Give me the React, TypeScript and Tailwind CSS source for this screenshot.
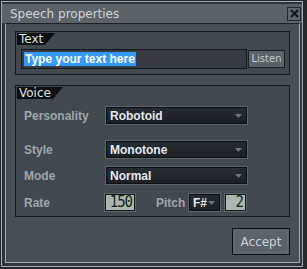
import React from "react";

function Tab({ label }: { label: string }) {
  return (
    <div className="flex h-[12px] items-stretch">
      <div className="bg-[#0c0e10] text-[#dfe3e7] text-[12px] leading-[12px] pl-[2px] pr-[2px]">{label}</div>
      <svg width="10" height="12" viewBox="0 0 10 12" className="block">
        <polygon points="0,0 10,0 0,12" fill="#0c0e10" />
      </svg>
    </div>
  );
}

function Dropdown({ value, w }: { value: string; w: string }) {
  return (
    <div className={`${w} h-[19px] border border-[#5c636a] bg-[#0d1013] p-px`}>
      <div className="h-full bg-gradient-to-b from-[#262c32] to-[#1b2025] flex items-center justify-between pl-[3px] pr-[4px]">
        <span className="text-[#e4e8ec] text-[12px] font-bold leading-none font-['Liberation_Sans',sans-serif]">{value}</span>
        <svg width="7" height="4" viewBox="0 0 7 4" className="block">
          <polygon points="0,0 7,0 3.5,4" fill="#6d757c" />
        </svg>
      </div>
    </div>
  );
}

function Lcd({ value, w }: { value: string; w: string }) {
  return (
    <div className={`${w} h-[19px] border border-[#5d646a] bg-[#151a1e] p-px`}>
      <div className="h-full bg-[#aab7ae] flex items-center justify-end pr-[2px]">
        <span className="text-[#18211c] text-[14px] leading-[15px] font-['DejaVu_Sans_Mono',monospace] tracking-[-1px] scale-y-[1.1]">{value}</span>
      </div>
    </div>
  );
}

export default function App() {
  const label = "text-[#9ea6ac] text-[12px] leading-none font-bold font-['Liberation_Sans',sans-serif]";
  return (
    <div className="w-[307px] h-[269px] bg-[#25292d] pl-px pt-px pr-[4px] pb-[2px] font-['DejaVu_Sans',sans-serif]">
      <div className="h-full w-full border border-[#a3a9ad] bg-[#30363b] p-[3px] pt-[2px] pr-[2px] flex flex-col">
        <div className="h-[19px] flex items-center justify-between bg-[#5b6268] -mx-[3px] -mr-[2px] pl-[8px] pr-[1px]">
          <span className="text-[#cfd4d8] text-[12px] leading-none">Speech properties</span>
          <div className="w-[14px] h-[14px] border border-[#23282c] bg-[#5e656b] flex items-center justify-center">
            <svg width="9" height="9" viewBox="0 0 9 9">
              <path d="M1 1 L8 8 M8 1 L1 8" stroke="#111417" strokeWidth="1.8" />
            </svg>
          </div>
        </div>
        <div className="flex-1 border border-[#a3a9ad] border-t-[#1d2125] bg-[#474e54] flex flex-col px-[9px] pt-[7px]">
          <div className="h-[44px] border border-[#15191c] bg-[#41484e] p-px">
            <Tab label="Text" />
            <div className="flex items-center mt-[4px] ml-[4px]">
              <div className="w-[226px] h-[20px] border border-[#15191c] bg-[#363c42] flex items-center pl-[2px]">
                <span className="bg-[#3399ff] text-white text-[12px] font-bold leading-[14px] px-px font-['Liberation_Sans',sans-serif]">Type your text here</span>
              </div>
              <div className="ml-px w-[37px] h-[18px] border border-[#1c2024] bg-[#5b6268] flex items-center justify-center">
                <span className="text-[#c2cad2] text-[10px] leading-none">Listen</span>
              </div>
            </div>
          </div>
          <div className="mt-[10px] h-[132px] border border-[#15191c] bg-[#41484e] p-px">
            <Tab label="Voice" />
            <div className="flex items-center mt-[7px] pl-[7px]">
              <span className={`${label} w-[81px]`}>Personality</span>
              <Dropdown value="Robotoid" w="w-[143px]" />
            </div>
            <div className="flex items-center mt-[15px] pl-[7px]">
              <span className={`${label} w-[81px]`}>Style</span>
              <Dropdown value="Monotone" w="w-[143px]" />
            </div>
            <div className="flex items-center mt-[7px] pl-[7px]">
              <span className={`${label} w-[81px]`}>Mode</span>
              <Dropdown value="Normal" w="w-[143px]" />
            </div>
            <div className="flex items-center mt-[8px] pl-[7px]">
              <span className={`${label} w-[80px]`}>Rate</span>
              <Lcd value="150" w="w-[32px]" />
              <span className={`${label} ml-[20px] w-[32px]`}>Pitch</span>
              <Dropdown value="F#" w="w-[33px]" />
              <div className="ml-[3px]">
                <Lcd value="2" w="w-[23px]" />
              </div>
            </div>
          </div>
          <div className="flex justify-end mt-[11px]">
            <div className="w-[58px] h-[27px] border border-[#0e1114] bg-[#5b6268] p-px">
              <div className="h-full border border-[#646b71] flex items-center justify-center">
                <span className="text-[#c8d0d8] text-[12px] leading-none">Accept</span>
              </div>
            </div>
          </div>
        </div>
      </div>
    </div>
  );
}
